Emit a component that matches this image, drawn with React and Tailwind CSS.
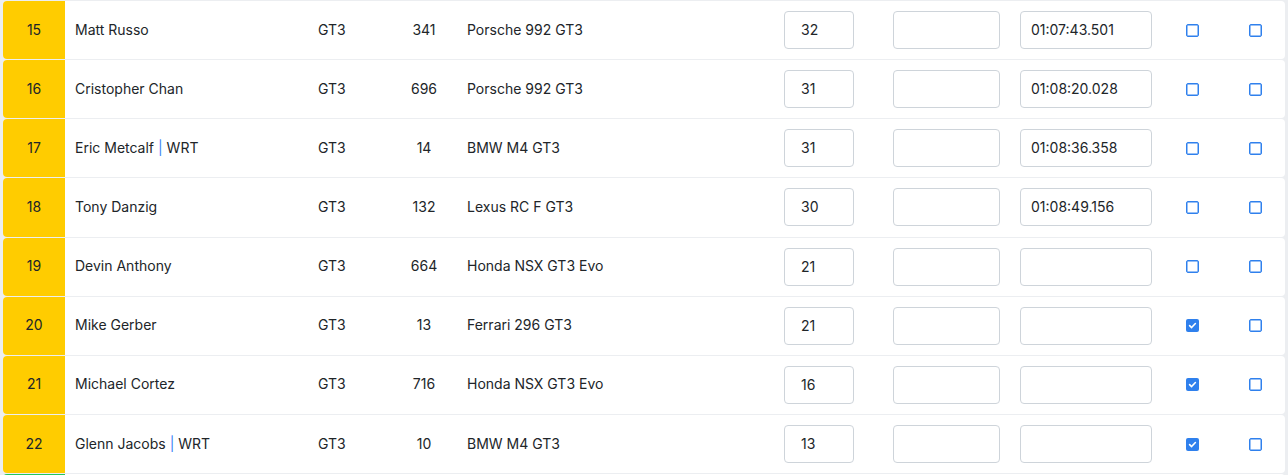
import React from "react";

const rows = [
  { pos: 15, name: "Matt Russo", cls: "GT3", num: "341", car: "Porsche 992 GT3", laps: "32", time: "01:07:43.501", c1: false, c2: false },
  { pos: 16, name: "Cristopher Chan", cls: "GT3", num: "696", car: "Porsche 992 GT3", laps: "31", time: "01:08:20.028", c1: false, c2: false },
  { pos: 17, name: "Eric Metcalf", team: "WRT", cls: "GT3", num: "14", car: "BMW M4 GT3", laps: "31", time: "01:08:36.358", c1: false, c2: false },
  { pos: 18, name: "Tony Danzig", cls: "GT3", num: "132", car: "Lexus RC F GT3", laps: "30", time: "01:08:49.156", c1: false, c2: false },
  { pos: 19, name: "Devin Anthony", cls: "GT3", num: "664", car: "Honda NSX GT3 Evo", laps: "21", time: "", c1: false, c2: false },
  { pos: 20, name: "Mike Gerber", cls: "GT3", num: "13", car: "Ferrari 296 GT3", laps: "21", time: "", c1: true, c2: false },
  { pos: 21, name: "Michael Cortez", cls: "GT3", num: "716", car: "Honda NSX GT3 Evo", laps: "16", time: "", c1: true, c2: false },
  { pos: 22, name: "Glenn Jacobs", team: "WRT", cls: "GT3", num: "10", car: "BMW M4 GT3", laps: "13", time: "", c1: true, c2: false },
];

function Check({ checked }) {
  if (checked) {
    return (
      <div className="w-[13px] h-[13px] rounded-[2px] bg-[#2f80ed] flex items-center justify-center">
        <svg width="9" height="9" viewBox="0 0 10 10">
          <polyline points="1.8,5.2 4,7.3 8.2,2.8" fill="none" stroke="white" strokeWidth="1.8" strokeLinecap="round" strokeLinejoin="round" />
        </svg>
      </div>
    );
  }
  return <div className="w-[13px] h-[13px] rounded-[2px] border border-[#2f80ed] bg-white shadow-[inset_0_0_0_0.5px_#2f80ed]" />;
}

function Input({ value, w, pl }) {
  return (
    <div className={`${w} h-[38px] border border-[#ced4da] rounded-[4px] bg-white flex items-center ${pl} pb-[1px] text-[14px] text-[#212529]`}>
      {value}
    </div>
  );
}

export default function App() {
  return (
    <div
      className="w-[1288px] min-h-[475px] bg-[#eceef1] px-[3px] pt-[1px] flex flex-col gap-[1px]"
      style={{ fontFamily: "Inter, 'Noto Sans', sans-serif" }}
    >
      {rows.map((r) => (
        <div key={r.pos} className="h-[58.15px] flex items-center bg-white rounded-[4px] text-[14px] text-[#212529] shrink-0">
          <div className="w-[62px] h-full rounded-l-[4px] flex items-center justify-center pb-[2px] bg-[#ffcc00]">
            {r.pos}
          </div>
          <div className="w-[243px] pl-[10px] pb-[2px] whitespace-nowrap">
            {r.name}
            {r.team && (
              <>
                {" "}
                <span className="text-[#3b82f6]">|</span> {r.team}
              </>
            )}
          </div>
          <div className="w-[84px] pl-[10px] pb-[2px]">{r.cls}</div>
          <div className="w-[64px] text-center pb-[2px]">{r.num}</div>
          <div className="w-[328px] pl-[11px] pb-[2px] whitespace-nowrap">{r.car}</div>
          <Input value={r.laps} w="w-[70px]" pl="pl-[16px]" />
          <div className="ml-[39px]">
            <Input value="" w="w-[107px]" pl="pl-[10px]" />
          </div>
          <div className="ml-[20px]">
            <Input value={r.time} w="w-[132px]" pl="pl-[10px]" />
          </div>
          <div className="ml-[34px]">
            <Check checked={r.c1} />
          </div>
          <div className="ml-[50px]">
            <Check checked={r.c2} />
          </div>
        </div>
      ))}
      <div className="h-[58px] flex bg-white rounded-[4px] shrink-0">
        <div className="w-[62px] h-full rounded-l-[4px] bg-[#22c55e]" />
      </div>
    </div>
  );
}
